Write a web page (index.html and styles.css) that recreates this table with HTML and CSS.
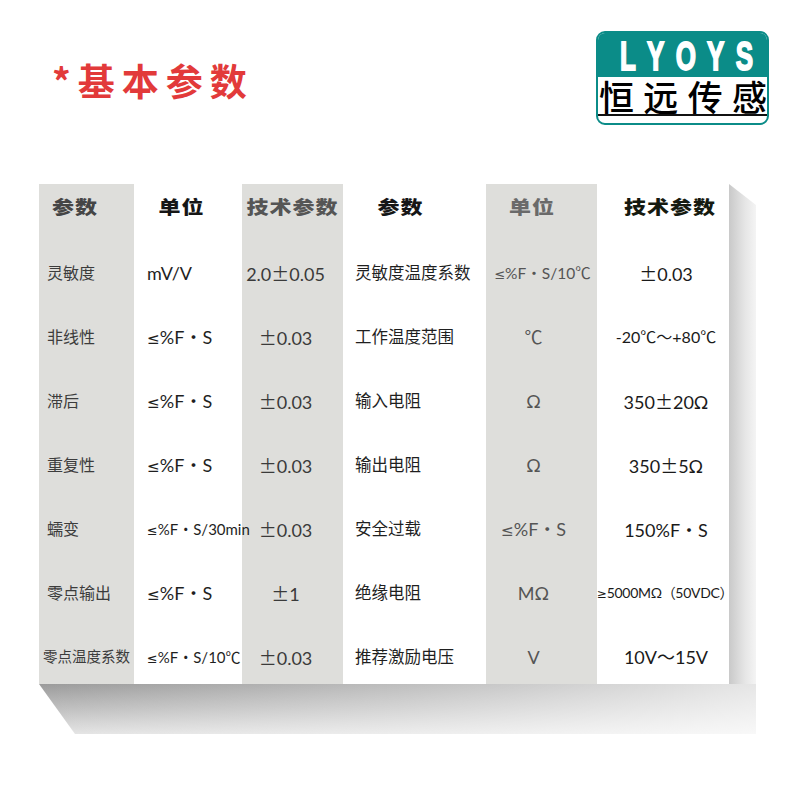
FILE: index.html
```html
<!DOCTYPE html>
<html lang="zh-CN">
<head>
<meta charset="utf-8">
<title>基本参数</title>
<link rel="stylesheet" href="styles.css">
</head>
<body>
<div class="top">
  <h1 class="title">*基本参数</h1>
  <div class="logo">
    <div class="logo-en"><span>L</span><span>Y</span><span>O</span><span>Y</span><span>S</span></div>
    <div class="logo-cn"><span>恒</span><span>远</span><span>传</span><span>感</span></div>
    <div class="logo-line"></div>
  </div>
</div>

<div class="stage">
  <table class="spec">
    <colgroup>
      <col class="c1"><col class="c2"><col class="c3"><col class="c4"><col class="c5"><col class="c6">
    </colgroup>
    <thead>
      <tr>
        <th class="h1"><span>参数</span></th>
        <th class="h2"><span>单位</span></th>
        <th class="h3"><span>技术参数</span></th>
        <th class="h4"><span>参数</span></th>
        <th class="h5"><span>单位</span></th>
        <th class="h6"><span>技术参数</span></th>
      </tr>
    </thead>
    <tbody>
      <tr>
        <td class="d1">灵敏度</td>
        <td class="d2">mV/V</td>
        <td class="d3">2.0<span class="cj">±</span>0.05</td>
        <td class="d4">灵敏度温度系数</td>
        <td class="d5 wide"><span class="le">≤</span>%F<span class="cj">・</span>S/10℃</td>
        <td class="d6"><span class="cj">±</span>0.03</td>
      </tr>
      <tr>
        <td class="d1">非线性</td>
        <td class="d2"><span class="le">≤</span>%F<span class="cj">・</span>S</td>
        <td class="d3"><span class="cj">±</span>0.03</td>
        <td class="d4">工作温度范围</td>
        <td class="d5">℃</td>
        <td class="d6 small">-20℃～+80℃</td>
      </tr>
      <tr>
        <td class="d1">滞后</td>
        <td class="d2"><span class="le">≤</span>%F<span class="cj">・</span>S</td>
        <td class="d3"><span class="cj">±</span>0.03</td>
        <td class="d4">输入电阻</td>
        <td class="d5">Ω</td>
        <td class="d6">350<span class="cj">±</span>20Ω</td>
      </tr>
      <tr>
        <td class="d1">重复性</td>
        <td class="d2"><span class="le">≤</span>%F<span class="cj">・</span>S</td>
        <td class="d3"><span class="cj">±</span>0.03</td>
        <td class="d4">输出电阻</td>
        <td class="d5">Ω</td>
        <td class="d6">350<span class="cj">±</span>5Ω</td>
      </tr>
      <tr>
        <td class="d1">蠕变</td>
        <td class="d2 tiny"><span class="le">≤</span>%F<span class="cj">・</span>S/30min</td>
        <td class="d3"><span class="cj">±</span>0.03</td>
        <td class="d4">安全过载</td>
        <td class="d5"><span class="le">≤</span>%F<span class="cj">・</span>S</td>
        <td class="d6">150%F<span class="cj">・</span>S</td>
      </tr>
      <tr>
        <td class="d1">零点输出</td>
        <td class="d2"><span class="le">≤</span>%F<span class="cj">・</span>S</td>
        <td class="d3"><span class="cj">±</span>1</td>
        <td class="d4">绝缘电阻</td>
        <td class="d5">MΩ</td>
        <td class="d6 tiny"><span class="le">≥</span>5000MΩ（50VDC）</td>
      </tr>
      <tr>
        <td class="d1 tiny">零点温度系数</td>
        <td class="d2 tiny"><span class="le">≤</span>%F<span class="cj">・</span>S/10℃</td>
        <td class="d3"><span class="cj">±</span>0.03</td>
        <td class="d4">推荐激励电压</td>
        <td class="d5">V</td>
        <td class="d6">10V～15V</td>
      </tr>
    </tbody>
  </table>
  <div class="shade-right"></div>
  <div class="shade-bottom"></div>
</div>
</body>
</html>
```

FILE: styles.css
```css
html, body {
  margin: 0;
  padding: 0;
  background: #ffffff;
}

body {
  width: 800px;
  height: 800px;
  overflow: hidden;
  font-family: "Lato", "Noto Sans CJK SC", sans-serif;
  color: #222;
}

.top {
  display: flex;
  justify-content: space-between;
  align-items: center;
  padding: 31px 31px 0 52px;
}

.title {
  margin: 4px 0 0 0;
  font-family: "Noto Sans CJK SC", sans-serif;
  font-weight: 700;
  font-size: 37px;
  letter-spacing: 7px;
  color: #e23a3a;
  line-height: 1;
}

.logo {
  width: 173px;
  height: 94px;
  box-sizing: border-box;
  border: 2px solid #0b8c88;
  border-radius: 9px;
  background: #ffffff;
  display: flex;
  flex-direction: column;
  overflow: hidden;
}

.logo-en {
  height: 42px;
  flex: none;
  background: #0b8c88;
  display: flex;
  justify-content: space-between;
  align-items: center;
  padding: 2px 14px 0 22px;
  color: #ffffff;
  font-family: "Liberation Sans", sans-serif;
  font-weight: 700;
  font-size: 26px;
  line-height: 1;
}

.logo-en span {
  display: inline-block;
  transform: scaleY(1.55);
  -webkit-text-stroke: 1.2px #ffffff;
}

.logo-cn {
  height: 37px;
  flex: none;
  display: flex;
  justify-content: space-between;
  align-items: center;
  padding: 0 0 0 1px;
  font-family: "Noto Sans CJK SC", sans-serif;
  font-weight: 500;
  font-size: 35px;
  line-height: 1;
  color: #000000;
}

.logo-line {
  height: 2px;
  flex: none;
  margin: 0;
  background: #111111;
}

.stage {
  margin: 59px 0 0 39px;
  display: grid;
  grid-template-columns: 690px 27px;
  grid-template-rows: 500px 50px;
}

.spec {
  grid-column: 1;
  grid-row: 1;
  width: 690px;
  height: 500px;
  table-layout: fixed;
  border-collapse: collapse;
  border-spacing: 0;
}

.c1 { width: 95px; background: #dededb; }
.c2 { width: 108px; background: #ffffff; }
.c3 { width: 101px; background: #dededb; }
.c4 { width: 143px; background: #ffffff; }
.c5 { width: 111px; background: #dededb; }
.c6 { width: 132px; background: #ffffff; }

.spec th {
  box-sizing: border-box;
  height: 52px;
  padding: 0 0 9px 0;
  font-family: "Noto Sans CJK SC", sans-serif;
  font-weight: 900;
  font-size: 22px;
  line-height: 1;
  letter-spacing: 1px;
  white-space: nowrap;
  vertical-align: middle;
}

.spec th span {
  display: inline-block;
  transform: scaleY(0.82);
}

.spec th.h1 { text-align: left; padding-left: 13px; color: #454545; }
.spec th.h2 { text-align: center; padding-right: 13px; color: #161616; }
.spec th.h3 { text-align: center; color: #555555; }
.spec th.h4 { text-align: center; padding-right: 28px; color: #161616; }
.spec th.h5 { text-align: center; padding-right: 19px; color: #6a6a6a; }
.spec th.h6 { text-align: center; padding-left: 14px; color: #161a10; }

.spec td {
  box-sizing: border-box;
  height: 64px;
  padding: 10px 0 0 0;
  font-size: 18px;
  line-height: 1;
  white-space: nowrap;
  vertical-align: middle;
  overflow: visible;
}

.cj {
  font-family: "Noto Sans CJK SC", sans-serif;
}

.le {
  font-family: "DejaVu Sans", sans-serif;
  font-size: 0.85em;
}

.spec td.d1 {
  text-align: left;
  padding-left: 8px;
  font-size: 16px;
  color: #3c3c3c;
}

.spec td.d2 {
  text-align: left;
  padding-left: 13px;
  color: #1f1f1f;
}

.spec td.d3 {
  text-align: center;
  padding-right: 14px;
  color: #3a3a3a;
}

.spec td.d4 {
  text-align: left;
  padding-left: 12px;
  font-size: 16.5px;
  color: #1f1f1f;
}

.spec td.d5 {
  text-align: center;
  padding-right: 16px;
  color: #555555;
}

.spec td.d6 {
  text-align: center;
  padding-left: 6px;
  color: #1a1a1a;
}

.spec td.small { font-size: 16px; }
.spec td.tiny { font-size: 15px; }
.spec td.d1.tiny { font-size: 14.5px; padding-left: 4px; }
.spec td.d6.tiny { font-size: 14px; letter-spacing: -0.3px; padding-left: 0; }
.spec td.wide {
  font-size: 15.5px;
  text-align: left;
  padding-left: 8px;
  padding-right: 0;
}

.shade-right {
  grid-column: 2;
  grid-row: 1 / 3;
  background: linear-gradient(to right, #c9c9c9, #e6e6e6 60%, #f4f4f4);
  clip-path: polygon(0 0, 100% 21px, 100% 100%, 0 100%);
}

.shade-bottom {
  grid-column: 1;
  grid-row: 2;
  margin-right: -27px;
  background:
    linear-gradient(to right, rgba(255,255,255,0) 0%, rgba(255,255,255,0.35) 50%, rgba(255,255,255,0.75) 100%),
    linear-gradient(to bottom, #9b9b9b, #e4e4e4);
  clip-path: polygon(0 0, 100% 0, 100% 100%, 36px 100%);
}
```
